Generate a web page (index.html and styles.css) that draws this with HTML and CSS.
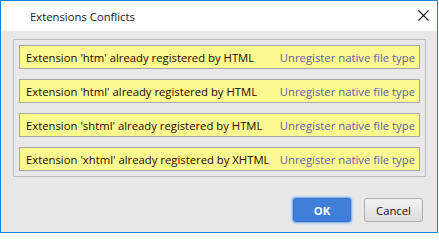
FILE: index.html
```html
<!DOCTYPE html>
<html>
<head>
<meta charset="utf-8">
<link rel="stylesheet" href="styles.css">
</head>
<body>
<div class="window">
  <div class="titlebar">
    <span class="title">Extensions Conflicts</span>
    <svg class="close" width="11" height="11" viewBox="0 0 11 11"><path d="M0.5 0.5L10.5 10.5M10.5 0.5L0.5 10.5" stroke="#1a1a1a" stroke-width="1.1" fill="none"/></svg>
  </div>
  <div class="content">
    <div class="panel">
      <div class="row"><span class="msg">Extension 'htm' already registered by HTML</span><span class="link">Unregister native file type</span></div>
      <div class="row"><span class="msg">Extension 'html' already registered by HTML</span><span class="link">Unregister native file type</span></div>
      <div class="row"><span class="msg">Extension 'shtml' already registered by HTML</span><span class="link">Unregister native file type</span></div>
      <div class="row"><span class="msg">Extension 'xhtml' already registered by XHTML</span><span class="link">Unregister native file type</span></div>
    </div>
    <div class="buttons">
      <button class="btn ok">OK</button>
      <button class="btn cancel">Cancel</button>
    </div>
  </div>
</div>
</body>
</html>
```
FILE: styles.css
```css
html, body {
  margin: 0;
  padding: 0;
  background: #ffffff;
}
body {
  font-family: "Open Sans", "Noto Sans", sans-serif;
  font-size: 11.3px;
}
.window {
  box-sizing: border-box;
  width: 438px;
  height: 233px;
  border: 1px solid #1883d7;
  display: flex;
  flex-direction: column;
  background: #e8e8e8;
}
.titlebar {
  height: 30px;
  background: #ffffff;
  display: flex;
  align-items: center;
  padding-left: 29px;
  padding-right: 8px;
}
.title {
  flex: 1;
  color: #1a1a1a;
  white-space: nowrap;
}
.close {
  display: block;
  margin-top: -1px;
}
.content {
  flex: 1;
  display: flex;
  flex-direction: column;
  padding: 8px 11px 10px 12px;
}
.panel {
  border: 1px solid #bcbcbc;
  padding: 5px;
  display: flex;
  flex-direction: column;
  gap: 10px;
}
.row {
  box-sizing: border-box;
  height: 24px;
  background: #fbf98f;
  border: 1px solid #a6a6a6;
  display: flex;
  align-items: center;
  justify-content: space-between;
  padding: 0 4px 0 6px;
  white-space: nowrap;
}
.msg {
  color: #2a0505;
}
.link {
  color: #6060b2;
}
.buttons {
  margin-top: auto;
  display: flex;
  justify-content: flex-end;
  align-items: center;
  gap: 13px;
  padding-right: 3px;
}
.btn {
  box-sizing: border-box;
  height: 24px;
  font-family: "Open Sans", "Noto Sans", sans-serif;
  font-size: 11.3px;
  padding: 0;
  border-radius: 3px;
}
.ok {
  width: 58px;
  background: #3f7fd9;
  border: 1px solid #3a74c9;
  color: #ffffff;
  font-weight: bold;
  box-shadow: 0 0 0 1px #8fb7ec, 0 0 2px 2px #b9d2f2;
}
.cancel {
  width: 59px;
  background: linear-gradient(#f2f2f2, #dcdcdc);
  border: 1px solid #adadad;
  color: #111111;
}
```
